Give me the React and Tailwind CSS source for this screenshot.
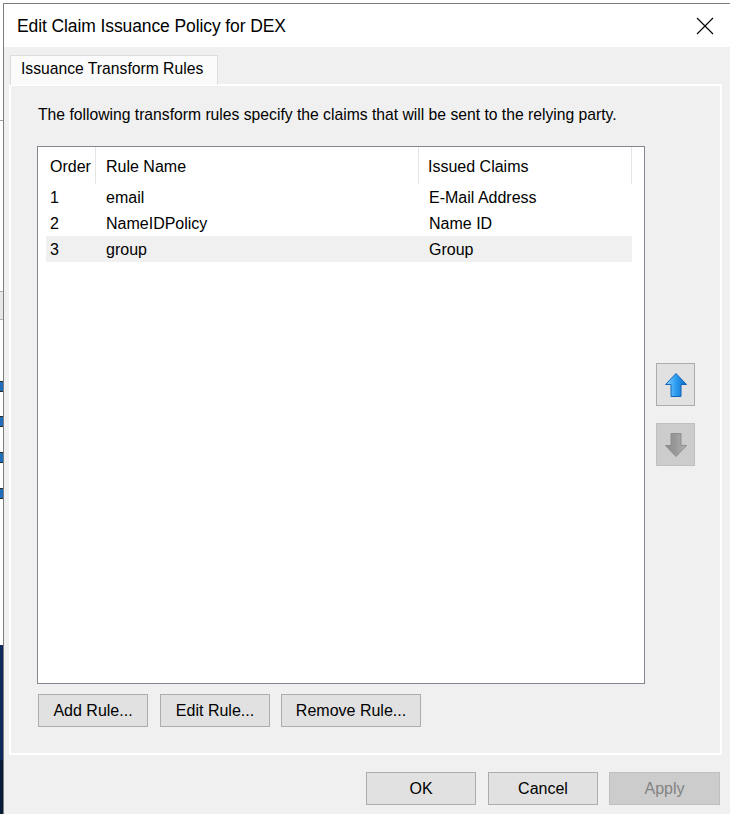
import React from 'react'

const rules = [
  { order: '1', name: 'email', claim: 'E-Mail Address' },
  { order: '2', name: 'NameIDPolicy', claim: 'Name ID' },
  { order: '3', name: 'group', claim: 'Group', selected: true },
]

function ArrowIcon({ down, disabled }) {
  const id = down ? 'arrDown' : 'arrUp'
  return (
    <svg width="24" height="26" viewBox="0 0 24 26" className={down ? 'rotate-180' : ''}>
      <defs>
        <linearGradient id={id} x1="0" y1="0" x2="1" y2="0">
          <stop offset="0" stopColor={disabled ? '#b5b5b5' : '#8fd3ff'} />
          <stop offset="0.5" stopColor={disabled ? '#9a9a9a' : '#2b9cf0'} />
          <stop offset="1" stopColor={disabled ? '#8a8a8a' : '#0d6ac4'} />
        </linearGradient>
      </defs>
      <polygon
        points="12,1.5 22.5,12.5 17,12.5 17,24.5 7,24.5 7,12.5 1.5,12.5"
        fill={`url(#${id})`}
        stroke={disabled ? '#8d8d8d' : '#1466b8'}
        strokeWidth="1"
        strokeLinejoin="round"
      />
    </svg>
  )
}

function Backdrop() {
  return (
    <div className="w-[3px] shrink-0 flex flex-col">
      <div className="h-[642px] bg-white flex flex-col">
        <div className="mt-[117px] h-px bg-[#a0a0a0]" />
        <div className="mt-[170px] h-[29px] bg-[#e8e8e8] border-y border-[#b0b0b0]" />
        <div className="mt-[61px] h-[11px] bg-[#1f6fb8] border-y border-[#2a2a2a]" />
        <div className="mt-[24px] h-[11px] bg-[#1f6fb8] border-y border-[#2a2a2a]" />
        <div className="mt-[25px] h-[11px] bg-[#1f6fb8] border-y border-[#2a2a2a]" />
        <div className="mt-[25px] h-[11px] bg-[#1f6fb8] border-y border-[#2a2a2a]" />
      </div>
      <div className="h-[115px] bg-[#0c2b5a]" />
      <div className="flex-1 bg-[#0a1b38]" />
    </div>
  )
}

function Btn({ children, className = '' }) {
  return (
    <button
      type="button"
      className={`h-[33px] border border-[#adadad] bg-[#e1e1e1] text-[16px] text-black flex items-center justify-center ${className}`}
    >
      {children}
    </button>
  )
}

export default function App() {
  return (
    <div className="w-[730px] h-[814px] overflow-hidden bg-white flex flex-col font-['Liberation_Sans',Arial,sans-serif] text-black">
      <div className="h-[3px] shrink-0 bg-white" />
      <div className="flex flex-1 min-h-0">
        <Backdrop />
        <div className="flex-1 border-l border-t border-[#7d7d7d] bg-[#f0f0f0] flex flex-col">
          <div className="h-[43px] shrink-0 bg-white flex items-center justify-between pl-[13px] pr-[16px]">
            <span className="text-[17.5px] tracking-[-0.1px] pt-[1px]">Edit Claim Issuance Policy for DEX</span>
            <svg width="18" height="18" viewBox="0 0 18 18">
              <path d="M1 1 L17 17 M17 1 L1 17" stroke="#000" strokeWidth="1.1" />
            </svg>
          </div>

          <div className="pt-[8px] pl-[5px] flex flex-col">
            <div className="ml-[1px] w-[208px] h-[30px] relative z-10 -mb-[1px] bg-[#fbfbfb] border border-b-0 border-[#dcdcdc] flex items-center pl-[10px] pb-[3px]">
              <span className="text-[15.7px]">Issuance Transform Rules</span>
            </div>
            <div className="w-[713px] h-[671px] border-2 border-white bg-[#f0f0f0] flex flex-col pl-[26px]">
              <p className="mt-[19px] ml-[1px] h-[20px] leading-[20px] text-[15.7px]">
                The following transform rules specify the claims that will be sent to the relying party.
              </p>
              <div className="mt-[21px] flex">
                <div className="w-[608px] h-[538px] border border-[#828790] bg-white flex flex-col">
                  <div className="h-[37px] flex text-[16px]">
                    <div className="w-[58px] pl-[12px] pt-[2px] flex items-center border-r border-[#e5e5e5]">Order</div>
                    <div className="w-[323px] pl-[10px] pt-[2px] flex items-center border-r border-[#e5e5e5]">Rule Name</div>
                    <div className="w-[213px] pl-[9px] pt-[2px] flex items-center border-r border-[#e5e5e5]">Issued Claims</div>
                  </div>
                  {rules.map((r) => (
                    <div
                      key={r.order}
                      className={`ml-[8px] w-[586px] h-[26px] pt-[1px] flex items-center text-[16px] ${r.selected ? 'bg-[#f0f0f0]' : ''}`}
                    >
                      <div className="w-[50px] pl-[4px]">{r.order}</div>
                      <div className="w-[323px] pl-[10px]">{r.name}</div>
                      <div className="pl-[10px]">{r.claim}</div>
                    </div>
                  ))}
                </div>
                <div className="ml-[11px] flex flex-col">
                  <div className="mt-[217px] w-[39px] h-[43px] border border-[#adadad] bg-[#e1e1e1] flex items-center justify-center">
                    <ArrowIcon />
                  </div>
                  <div className="mt-[17px] w-[39px] h-[43px] border border-[#bfbfbf] bg-[#cccccc] flex items-center justify-center">
                    <ArrowIcon down disabled />
                  </div>
                </div>
              </div>
              <div className="mt-[10px] ml-[1px] flex">
                <Btn className="w-[110px]">Add Rule...</Btn>
                <Btn className="w-[110px] ml-[12px]">Edit Rule...</Btn>
                <Btn className="w-[140px] ml-[11px]">Remove Rule...</Btn>
              </div>
            </div>
          </div>

          <div className="mt-[17px] pl-[362px] flex">
            <Btn className="w-[110px] border-[#0078d7]">OK</Btn>
            <Btn className="w-[110px] ml-[12px]">Cancel</Btn>
            <button
              type="button"
              className="w-[111px] h-[33px] ml-[11px] border border-[#bfbfbf] bg-[#cccccc] text-[16px] text-[#838383] flex items-center justify-center"
            >
              Apply
            </button>
          </div>
        </div>
      </div>
    </div>
  )
}
